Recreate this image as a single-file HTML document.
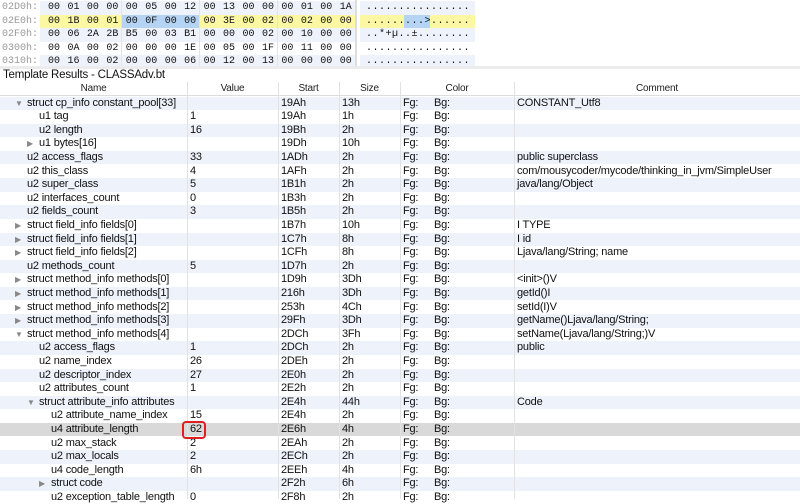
<!DOCTYPE html>
<html><head><style>
body{margin:0;width:800px;height:499px;overflow:hidden;background:#fff;font-family:"Liberation Sans",sans-serif;font-size:11px;letter-spacing:-0.2px;color:#111;position:relative}
.a{position:absolute;white-space:nowrap}
.hr{position:absolute;height:13.5px;font-family:"Liberation Mono",monospace;font-size:10px;line-height:13.5px;letter-spacing:0}
.hr span{position:absolute;top:0}
.ad{position:absolute;left:2px;font-family:"Liberation Mono",monospace;font-size:10px;color:#999;line-height:13.5px;letter-spacing:0}
.r{position:absolute;left:0;width:800px;height:13.6px;line-height:13.6px}
.r.b{background:#edf2fb}
.r.s{background:#d9d9d9}
.r div{position:absolute;top:0}
.vl{position:absolute;top:82px;bottom:0;width:1px;background:#e2e2e2}
.ar{color:#888;font-size:8px}
</style></head><body>
<div class="ad" style="top:1px">02D0h:</div>
<div class="ad" style="top:14.5px">02E0h:</div>
<div class="ad" style="top:28px">02F0h:</div>
<div class="ad" style="top:41.5px">0300h:</div>
<div class="ad" style="top:55px">0310h:</div>
<div id="hex"></div>
<div class="a" style="left:121px;top:0;width:1px;height:66px;background:#e4e4e4"></div>
<div class="a" style="left:199px;top:0;width:1px;height:66px;background:#e4e4e4"></div>
<div class="a" style="left:277px;top:0;width:1px;height:66px;background:#e4e4e4"></div>
<div class="a" style="left:355px;top:0;width:2px;height:66px;background:#ddd"></div>
<div class="a" style="left:0;top:66px;width:800px;height:3px;background:#ececec"></div>
<div class="a" style="left:3px;top:68px;font-size:11.5px;line-height:14px">Template Results - CLASSAdv.bt</div>
<div class="a" style="left:0;top:82px;width:800px;height:14px;border-bottom:1px solid #ddd;box-sizing:border-box;font-size:10px;line-height:14px;color:#222">
<div class="a" style="left:0;width:187px;text-align:center">Name</div>
<div class="a" style="left:187px;width:91px;text-align:center">Value</div>
<div class="a" style="left:278px;width:61px;text-align:center">Start</div>
<div class="a" style="left:339px;width:61px;text-align:center">Size</div>
<div class="a" style="left:400px;width:114px;text-align:center">Color</div>
<div class="a" style="left:514px;width:286px;text-align:center">Comment</div>
</div>
<div id="rows"></div>
<div class="vl" style="left:187px"></div><div class="vl" style="left:278px"></div><div class="vl" style="left:339px"></div><div class="vl" style="left:400px"></div><div class="vl" style="left:514px"></div>
<div class="a" style="left:182px;top:421px;width:24px;height:18px;border:2px solid #e02020;border-radius:4px;box-sizing:border-box"></div>
<script>
var HX=[
'00 01 00 00 00 05 00 12 00 13 00 00 00 01 00 1A',
'00 1B 00 01 00 0F 00 00 00 3E 00 02 00 02 00 00',
'00 06 2A 2B B5 00 03 B1 00 00 00 02 00 10 00 00',
'00 0A 00 02 00 00 00 1E 00 05 00 1F 00 11 00 00',
'00 16 00 02 00 00 00 06 00 12 00 13 00 00 00 00'];
var AS=['................','.........>......','..*+\u00b5..\u00b1........','................','................'];
var BG=['#edf2fb','#fbf7a2','#edf2fb','#fff','#edf2fb'];
var g='';
HX.forEach(function(l,j){var t=1+13.5*j;
g+='<div class="hr" style="left:40px;width:315px;top:'+t+'px;background:'+BG[j]+'">';
if(j==1)g+='<div style="position:absolute;left:81px;width:78px;height:13.5px;background:#b5d3f3"></div>';
l.split(' ').forEach(function(b,i){g+='<span style="left:'+(8+19.45*i)+'px">'+b+'</span>';});
g+='</div><div class="hr" style="left:360px;width:115px;top:'+t+'px;background:'+BG[j]+'">';
if(j==1)g+='<div style="position:absolute;left:44px;width:26px;height:13.5px;background:#b5d3f3"></div>';
AS[j].split('').forEach(function(c,i){g+='<span style="left:'+(6+6.5*i)+'px">'+c+'</span>';});
g+='</div>';});
document.getElementById('hex').innerHTML=g;
var R=[
[1,'▼','struct cp_info constant_pool[33]','','19Ah','13h','CONSTANT_Utf8'],
[2,'','u1 tag','1','19Ah','1h',''],
[2,'','u2 length','16','19Bh','2h',''],
[2,'▶','u1 bytes[16]','','19Dh','10h',''],
[1,'','u2 access_flags','33','1ADh','2h','public superclass'],
[1,'','u2 this_class','4','1AFh','2h','com/mousycoder/mycode/thinking_in_jvm/SimpleUser'],
[1,'','u2 super_class','5','1B1h','2h','java/lang/Object'],
[1,'','u2 interfaces_count','0','1B3h','2h',''],
[1,'','u2 fields_count','3','1B5h','2h',''],
[1,'▶','struct field_info fields[0]','','1B7h','10h','I TYPE'],
[1,'▶','struct field_info fields[1]','','1C7h','8h','I id'],
[1,'▶','struct field_info fields[2]','','1CFh','8h','Ljava/lang/String; name'],
[1,'','u2 methods_count','5','1D7h','2h',''],
[1,'▶','struct method_info methods[0]','','1D9h','3Dh','&lt;init&gt;()V'],
[1,'▶','struct method_info methods[1]','','216h','3Dh','getId()I'],
[1,'▶','struct method_info methods[2]','','253h','4Ch','setId(I)V'],
[1,'▶','struct method_info methods[3]','','29Fh','3Dh','getName()Ljava/lang/String;'],
[1,'▼','struct method_info methods[4]','','2DCh','3Fh','setName(Ljava/lang/String;)V'],
[2,'','u2 access_flags','1','2DCh','2h','public'],
[2,'','u2 name_index','26','2DEh','2h',''],
[2,'','u2 descriptor_index','27','2E0h','2h',''],
[2,'','u2 attributes_count','1','2E2h','2h',''],
[2,'▼','struct attribute_info attributes','','2E4h','44h','Code'],
[3,'','u2 attribute_name_index','15','2E4h','2h',''],
[3,'','u4 attribute_length','62','2E6h','4h',''],
[3,'','u2 max_stack','2','2EAh','2h',''],
[3,'','u2 max_locals','2','2ECh','2h',''],
[3,'','u4 code_length','6h','2EEh','4h',''],
[3,'▶','struct code','','2F2h','6h',''],
[3,'','u2 exception_table_length','0','2F8h','2h','']];
var h='';
R.forEach(function(r,i){
var x=15+(r[0]-1)*12;var cls=i==24?'r s':(i%2==0?'r b':'r');
h+='<div class="'+cls+'" style="top:'+(96.5+13.6*i)+'px">'+
(r[1]?'<div class="ar" style="left:'+x+'px">'+r[1]+'</div>':'')+
'<div style="left:'+(x+12)+'px">'+r[2]+'</div><div style="left:190px">'+r[3]+'</div><div style="left:281px">'+r[4]+'</div><div style="left:342px">'+r[5]+'</div><div style="left:403px">Fg:</div><div style="left:434px">Bg:</div><div style="left:517px">'+r[6]+'</div></div>';});
document.getElementById('rows').innerHTML=h;
</script>
</body></html>
